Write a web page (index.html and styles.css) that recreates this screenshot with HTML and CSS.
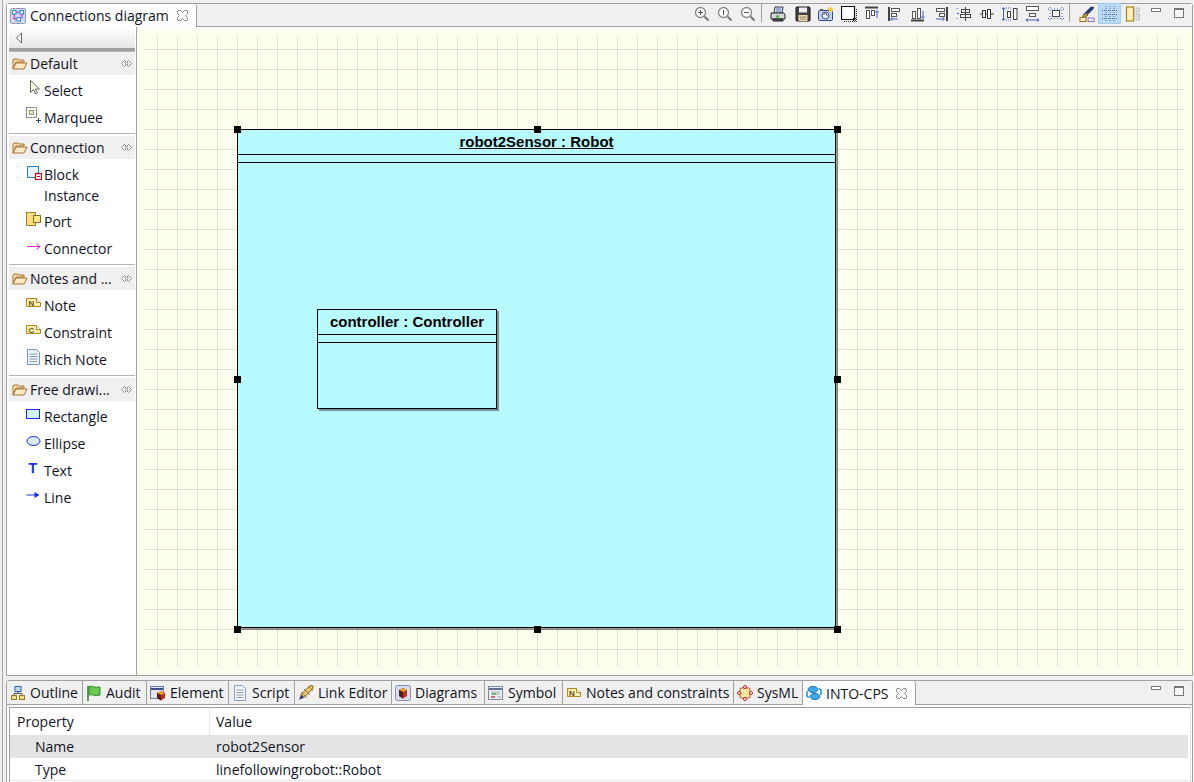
FILE: index.html
```html
<!DOCTYPE html>
<html lang="en">
<head>
    <meta charset="UTF-8">
    <meta name="viewport" content="width=device-width, initial-scale=1.0">
    <title>Connections diagram</title>
    <link rel="stylesheet" href="styles.css">
</head>
<body>
<div class="app">

    <!-- editor pane -->
    <div class="pane editor">
        <div class="tab-strip editor-strip">
            <div class="tab tab-active editor-tab">
                <svg class="icon" viewBox="0 0 16 16"><rect x="0.5" y="0.5" width="15" height="15" rx="2" fill="#d8dcf0" stroke="#8890b0"/><path d="M0 5.5h16M0 10.5h16M5.5 0v16M10.5 0v16" stroke="#b8c0dc"/><path d="M5 4h6M4 6v5h4M12 6v4" stroke="#d010c0" fill="none"/><rect x="2.5" y="2.5" width="3.5" height="3.5" fill="#fff" stroke="#2090e0"/><rect x="10" y="2.5" width="3.5" height="3.5" fill="#fff" stroke="#2090e0"/><rect x="7" y="9.5" width="3.5" height="3.5" fill="#fff" stroke="#2090e0"/></svg>
                <span>Connections diagram</span>
                <svg class="close" viewBox="0 0 11 11"><path d="M1 .5h2.500l2 2 2-2H10l.5.5v2.500l-2 2 2 2V10l-.5.500H7.500l-2-2-2 2H1L.5 10V7.500l2-2-2-2V1z" fill="#fff" stroke="#8a8a8a"/></svg>
            </div>
            <div class="toolbar">
                <span class="tool-btn"><svg class="icon" viewBox="0 0 16 16"><circle cx="6.500" cy="6.500" r="5" fill="#fff" stroke="#8c8c8c" stroke-width="1.400"/><path d="M4 6.500h5M6.500 4v5" stroke="#555"/><path d="M10.500 10.500l4 4" stroke="#777" stroke-width="2"/></svg></span>
                <span class="tool-btn"><svg class="icon" viewBox="0 0 16 16"><circle cx="6.500" cy="6.500" r="5" fill="#fff" stroke="#8c8c8c" stroke-width="1.400"/><path d="M6.500 4v5" stroke="#555"/><path d="M10.500 10.500l4 4" stroke="#777" stroke-width="2"/></svg></span>
                <span class="tool-btn"><svg class="icon" viewBox="0 0 16 16"><circle cx="6.500" cy="6.500" r="5" fill="#fff" stroke="#8c8c8c" stroke-width="1.400"/><path d="M4 6.500h5" stroke="#555"/><path d="M10.500 10.500l4 4" stroke="#777" stroke-width="2"/></svg></span>
                <span class="tool-sep"></span>
                <span class="tool-btn print-btn"><svg class="icon" viewBox="0 0 16 16"><path d="M5 1h8l-1 6H4z" fill="#dfe8f5" stroke="#335"/><path d="M6 3h5M6 5h5" stroke="#57a"/><path d="M1 7h13l1 2v4H1z" fill="#d5d5d5" stroke="#222"/><rect x="6" y="9.500" width="3" height="2" fill="#20c030"/><path d="M3 13h10v2H3z" fill="#555" stroke="#222"/></svg></span>
                <span class="tool-btn"><svg class="icon" viewBox="0 0 16 16"><rect x="1" y="1" width="14" height="14" rx="1" fill="#444" stroke="#111"/><rect x="4" y="1.500" width="8" height="5" fill="#eee"/><rect x="3.500" y="9" width="9" height="6" fill="#e6d9a0"/><path d="M5 11h6M5 13h6" stroke="#987"/></svg></span>
                <span class="tool-btn"><svg class="icon" viewBox="0 0 16 16"><rect x="0.500" y="4.500" width="14" height="10" rx="1" fill="#c6d2ea" stroke="#334a88"/><circle cx="7.500" cy="9.500" r="3.500" fill="#eef" stroke="#334a88"/><path d="M5.500 9l2-2 2 3" stroke="#446" fill="none"/><rect x="2" y="3" width="3" height="2" fill="#556"/><path d="M12.500 0l1 2 2 .5-1.500 1.500.5 2-2-1-2 1 .5-2L9.500 2.500l2-.5z" fill="#f2d020"/></svg></span>
                <span class="tool-btn"><svg class="icon" viewBox="0 0 16 16"><path d="M.5 13.500V.5h13v13z" fill="#fff" stroke="#111" stroke-width="1.200"/><path d="M15.500 3v12.500H3" fill="none" stroke="#222" stroke-dasharray="1 1"/><path d="M12 12l3 3M15 12l-3 3" stroke="#222"/></svg></span>
                <span class="tool-btn"><svg class="icon" viewBox="0 0 16 16"><path d="M1 1.500h13" stroke="#444" stroke-width="2"/><rect x="2.500" y="4.500" width="3" height="8" fill="#fff" stroke="#555"/><rect x="7.500" y="4.500" width="3" height="5" fill="#fff" stroke="#555"/><path d="M13 12V5M11.500 6.500L13 4.500l1.500 2" stroke="#4060c0" fill="none"/></svg></span>
                <span class="tool-btn"><svg class="icon" viewBox="0 0 16 16"><path d="M2 1v14" stroke="#444" stroke-width="2"/><rect x="4.500" y="2.500" width="8" height="3" fill="#fff" stroke="#555"/><rect x="4.500" y="7.500" width="5" height="3" fill="#fff" stroke="#555"/><path d="M4 13h7M5.500 11.500L3.500 13l2 1.500" stroke="#4060c0" fill="none"/></svg></span>
                <span class="tool-btn"><svg class="icon" viewBox="0 0 16 16"><path d="M1 14.500h13" stroke="#444" stroke-width="2"/><rect x="2.500" y="5.500" width="3" height="7" fill="#fff" stroke="#555"/><rect x="7.500" y="2.500" width="3" height="10" fill="#fff" stroke="#555"/><path d="M13 5v7M11.500 10.500L13 12.500l1.500-2" stroke="#4060c0" fill="none"/></svg></span>
                <span class="tool-btn"><svg class="icon" viewBox="0 0 16 16"><path d="M14 1v14" stroke="#444" stroke-width="2"/><rect x="3.500" y="2.500" width="8" height="3" fill="#fff" stroke="#555"/><rect x="6.500" y="7.500" width="5" height="3" fill="#fff" stroke="#555"/><path d="M3 13h8M9.500 11.500l2 1.500-2 1.500" stroke="#4060c0" fill="none"/></svg></span>
                <span class="tool-btn"><svg class="icon" viewBox="0 0 16 16"><path d="M1 2v1M1 7.500h2M1 12v1" stroke="#4060c0"/><rect x="5.500" y="3.500" width="8" height="3" fill="#fff" stroke="#444"/><rect x="4.500" y="8.500" width="10" height="3" fill="#fff" stroke="#444"/><path d="M9.500 1v14" stroke="#444"/></svg></span>
                <span class="tool-btn"><svg class="icon" viewBox="0 0 16 16"><path d="M1 8h14" stroke="#444"/><rect x="3.500" y="4.500" width="3" height="7" fill="#fff" stroke="#333"/><rect x="8.500" y="3.500" width="3" height="9" fill="#fff" stroke="#333"/></svg></span>
                <span class="tool-btn"><svg class="icon" viewBox="0 0 16 16"><path d="M1.500 2v12M0 3.500L1.500 1.500 3 3.500M0 12.500l1.500 2 1.500-2" stroke="#4060c0" fill="none"/><rect x="5.500" y="5.500" width="3" height="6" fill="#fff" stroke="#444"/><rect x="11.500" y="2.500" width="3.500" height="11" fill="#fff" stroke="#444"/><path d="M4 2h6M4 14h6" stroke="#4060c0" stroke-dasharray="1 1"/></svg></span>
                <span class="tool-btn"><svg class="icon" viewBox="0 0 16 16"><rect x="1.500" y="0.500" width="12" height="4" fill="#fff" stroke="#555"/><rect x="4.500" y="7.500" width="6" height="3" fill="#fff" stroke="#555"/><path d="M1 14h13M3 12.500L1 14l2 1.500M12 12.500l2 1.500-2 1.500" stroke="#4060c0" fill="none"/></svg></span>
                <span class="tool-btn"><svg class="icon" viewBox="0 0 16 16"><rect x="4.500" y="4.500" width="7" height="6" fill="#fff" stroke="#444"/><path d="M2 1v14M14 1v14M0 3h16M0 12.500h16" stroke="#4060c0" stroke-dasharray="1 2"/></svg></span>
                <span class="tool-sep tool-sep-wide"></span>
                <span class="tool-btn"><svg class="icon" viewBox="0 0 16 16"><path d="M15 1l-3-0.500-8 8 2.500 2.500 8-8z" fill="#283878"/><path d="M7 7l2 2-3.500 3-2-2z" fill="#c89a30" stroke="#654"/><rect x="1" y="11.500" width="6" height="4" fill="#fff3c8" stroke="#a07010"/><rect x="9" y="12" width="6" height="3.500" fill="#eee" stroke="#9070c0"/></svg></span>
                <span class="tool-btn tool-btn-on"><svg class="icon" viewBox="0 0 16 16"><path d="M0 4.500h16M0 8.500h16M0 12.500h16M4 0v16M8 0v16M12 0v16" stroke="#5070a0" stroke-dasharray="1 1"/></svg></span>
                <span class="tool-btn"><svg class="icon" viewBox="0 0 16 16"><rect x="1.500" y="1" width="7" height="14" fill="#fff0c0" stroke="#b08010" stroke-width="1.200"/><rect x="9" y="2" width="5.500" height="4" fill="#ddd" stroke="#aaa" stroke-dasharray="1 1"/><rect x="9" y="8" width="5.500" height="6" fill="#ddd" stroke="#aaa" stroke-dasharray="1 1"/></svg></span>
                <span class="tool-btn"><span class="min-icon"></span></span>
                <span class="tool-btn"><span class="max-icon"></span></span>
            </div>
        </div>

        <div class="editor-body">
            <div class="palette">
                <div class="palette-head">
                    <svg class="back-arrow" viewBox="0 0 8 12"><path d="M6.500 1L1.500 6l5 5z" fill="#fff" stroke="#666"/></svg>
                </div>

                <div class="group">
                    <div class="group-head">
                        <svg class="icon" viewBox="0 0 16 16"><path d="M1 13V4l1-1h4l1 1h5v2H4z" fill="#f6e0b0" stroke="#a87030"/><path d="M1 13l3-6h11l-3 6z" fill="#fbe9c4" stroke="#a87030"/></svg>
                        <span class="group-name">Default</span>
                        <svg class="pin" viewBox="0 0 11 7"><path d="M.5 3.500l3-3 1.500 1.500-1 1.500 1 1.500-1.500 1.500zM10.500 3.500l-3-3-1.500 1.500 1 1.500-1 1.500 1.500 1.500z" fill="#fff" stroke="#808080" stroke-width=".9"/></svg>
                    </div>
                    <div class="item">
                        <svg class="icon" viewBox="0 0 16 16"><path d="M4.500 0.500v12l3-3 2 4.500 2-1-2-4h4z" fill="#fdfbd8" stroke="#666"/></svg>
                        <span>Select</span>
                    </div>
                    <div class="item">
                        <svg class="icon" viewBox="0 0 16 16"><rect x="0.500" y="0.500" width="10" height="10" fill="none" stroke="#555" stroke-dasharray="2 1"/><rect x="3.500" y="3.500" width="4" height="4" fill="#e6e2b8" stroke="#998"/><path d="M10 13.500h5M12.500 11v5" stroke="#224a78"/></svg>
                        <span>Marquee</span>
                    </div>
                </div>

                <div class="group">
                    <div class="group-head">
                        <svg class="icon" viewBox="0 0 16 16"><path d="M1 13V4l1-1h4l1 1h5v2H4z" fill="#f6e0b0" stroke="#a87030"/><path d="M1 13l3-6h11l-3 6z" fill="#fbe9c4" stroke="#a87030"/></svg>
                        <span class="group-name">Connection</span>
                        <svg class="pin" viewBox="0 0 11 7"><path d="M.5 3.500l3-3 1.500 1.500-1 1.500 1 1.500-1.500 1.500zM10.500 3.500l-3-3-1.500 1.500 1 1.500-1 1.500 1.500 1.500z" fill="#fff" stroke="#808080" stroke-width=".9"/></svg>
                    </div>
                    <div class="item item-tall">
                        <svg class="icon" viewBox="0 0 16 16"><rect x="1.500" y="2.500" width="11" height="11" fill="#e4f2fc" stroke="#2080d0"/><rect x="9.500" y="9.500" width="6" height="6" fill="#fff" stroke="#c01020" stroke-width="1.300"/><path d="M11 12.500h3" stroke="#c01020"/></svg>
                        <span>Block Instance</span>
                    </div>
                    <div class="item">
                        <svg class="icon" viewBox="0 0 16 16"><rect x="0.500" y="1.500" width="9" height="13" fill="#f8dc80" stroke="#a08030"/><rect x="7.500" y="4.500" width="7" height="7" fill="#fbe58f" stroke="#8a7020"/></svg>
                        <span>Port</span>
                    </div>
                    <div class="item">
                        <svg class="icon" viewBox="0 0 16 16"><path d="M1 8.500h13M10.500 5.500l3.500 3-3.500 3" fill="none" stroke="#e020d0"/></svg>
                        <span>Connector</span>
                    </div>
                </div>

                <div class="group">
                    <div class="group-head">
                        <svg class="icon" viewBox="0 0 16 16"><path d="M1 13V4l1-1h4l1 1h5v2H4z" fill="#f6e0b0" stroke="#a87030"/><path d="M1 13l3-6h11l-3 6z" fill="#fbe9c4" stroke="#a87030"/></svg>
                        <span class="group-name">Notes and ...</span>
                        <svg class="pin" viewBox="0 0 11 7"><path d="M.5 3.500l3-3 1.500 1.500-1 1.500 1 1.500-1.500 1.500zM10.500 3.500l-3-3-1.500 1.500 1 1.500-1 1.500 1.500 1.500z" fill="#fff" stroke="#808080" stroke-width=".9"/></svg>
                    </div>
                    <div class="item">
                        <svg class="icon" viewBox="0 0 16 16"><path d="M.5 3.500h10l4 4v4h-14z" fill="#fbeeb0" stroke="#b08820"/><path d="M10.500 3.500v4h4" fill="#fff" stroke="#b08820"/><text x="2.500" y="10.500" class="icon-letter">N</text></svg>
                        <span>Note</span>
                    </div>
                    <div class="item">
                        <svg class="icon" viewBox="0 0 16 16"><path d="M.5 3.500h10l4 4v4h-14z" fill="#fbeeb0" stroke="#b08820"/><path d="M10.500 3.500v4h4" fill="#fff" stroke="#b08820"/><text x="2.500" y="10.500" class="icon-letter">C</text></svg>
                        <span>Constraint</span>
                    </div>
                    <div class="item">
                        <svg class="icon" viewBox="0 0 16 16"><path d="M1.500 .5h9l3 3v12h-12z" fill="#eef3fb" stroke="#7098c8"/><path d="M3.500 5h8M3.500 7.500h8M3.500 10h8M3.500 12.500h8" stroke="#8c9cb4"/></svg>
                        <span>Rich Note</span>
                    </div>
                </div>

                <div class="group">
                    <div class="group-head">
                        <svg class="icon" viewBox="0 0 16 16"><path d="M1 13V4l1-1h4l1 1h5v2H4z" fill="#f6e0b0" stroke="#a87030"/><path d="M1 13l3-6h11l-3 6z" fill="#fbe9c4" stroke="#a87030"/></svg>
                        <span class="group-name">Free drawi...</span>
                        <svg class="pin" viewBox="0 0 11 7"><path d="M.5 3.500l3-3 1.500 1.500-1 1.500 1 1.500-1.500 1.500zM10.500 3.500l-3-3-1.500 1.500 1 1.500-1 1.500 1.500 1.500z" fill="#fff" stroke="#808080" stroke-width=".9"/></svg>
                    </div>
                    <div class="item">
                        <svg class="icon" viewBox="0 0 16 16"><rect x="0.500" y="3.500" width="13" height="9" fill="#d4f4fb" stroke="#1830d8"/></svg>
                        <span>Rectangle</span>
                    </div>
                    <div class="item">
                        <svg class="icon" viewBox="0 0 16 16"><ellipse cx="7.500" cy="8" rx="6.500" ry="4.500" fill="#d4eafb" stroke="#1830d8"/></svg>
                        <span>Ellipse</span>
                    </div>
                    <div class="item">
                        <svg class="icon" viewBox="0 0 16 16"><text x="2.500" y="13" class="icon-t">T</text></svg>
                        <span>Text</span>
                    </div>
                    <div class="item">
                        <svg class="icon" viewBox="0 0 16 16"><path d="M.5 8h9" stroke="#1830d8"/><path d="M8.500 5l5 3-5 3z" fill="#1830d8"/></svg>
                        <span>Line</span>
                    </div>
                </div>
            </div>

            <div class="canvas">
                <div class="grid">
                    <div class="block block-main">
                        <div class="block-title block-title-main">robot2Sensor : Robot</div>
                        <div class="block-gap"></div>
                        <div class="block block-child">
                            <div class="block-title">controller : Controller</div>
                            <div class="block-gap"></div>
                        </div>
                        <span class="handle h-left h-top"></span>
                        <span class="handle h-mid h-top"></span>
                        <span class="handle h-right h-top"></span>
                        <span class="handle h-left h-center"></span>
                        <span class="handle h-right h-center"></span>
                        <span class="handle h-left h-bottom"></span>
                        <span class="handle h-mid h-bottom"></span>
                        <span class="handle h-right h-bottom"></span>
                    </div>
                </div>
            </div>
        </div>
    </div>

    <!-- bottom views -->
    <div class="pane views">
        <div class="tab-strip view-strip">
            <div class="tab view-tab tab-outline">
                <svg class="icon" viewBox="0 0 16 16"><rect x="5" y="1.500" width="6" height="5" fill="#bcd8f4" stroke="#3060b0"/><rect x="1.500" y="10.500" width="5" height="4" fill="#f8dc80" stroke="#a07820"/><rect x="9.500" y="10.500" width="5" height="4" fill="#f8dc80" stroke="#a07820"/><path d="M8 7v2M4 10V8.500h8V10" fill="none" stroke="#555"/></svg>
                <span>Outline</span>
            </div>
            <div class="tab view-tab tab-audit">
                <svg class="icon" viewBox="0 0 16 16"><path d="M2 1v15" stroke="#2a7a2a" stroke-width="1.500"/><path d="M3 1.500c3-1 5 1.500 11 .5v8c-5 1.500-8-1-11 0z" fill="#6cc84c" stroke="#2f8a2f"/></svg>
                <span>Audit</span>
            </div>
            <div class="tab view-tab tab-element">
                <svg class="icon" viewBox="0 0 16 16"><rect x="0.500" y="1.500" width="13" height="12" fill="#dfe4f2" stroke="#6a7aa0"/><path d="M1 4h12" stroke="#405080" stroke-width="2"/><path d="M7 8l4-2 4 2v5l-4 2.500L7 13z" fill="#c03020"/><path d="M7 8l4 2 4-2-4-2z" fill="#e8a020"/><path d="M11 10v5.500L7 13V8z" fill="#502018"/></svg>
                <span>Element</span>
            </div>
            <div class="tab view-tab tab-script">
                <svg class="icon" viewBox="0 0 16 16"><path d="M2.500 .5h8l3 3v12h-11z" fill="#f4f6fb" stroke="#8aa0c0"/><path d="M4.500 5h7M4.500 7.500h7M4.500 10h7M4.500 12.500h7" stroke="#909cb0"/></svg>
                <span>Script</span>
            </div>
            <div class="tab view-tab tab-link">
                <svg class="icon" viewBox="0 0 16 16"><path d="M15 1l-3-.5-9 9 3 3 9-9z" fill="#e8c868" stroke="#806020"/><path d="M6 4l6 6M3 7l6 6M10 1l5 5" stroke="#806020" stroke-width=".7"/><path d="M3 9.500l-2 5.500 5-2.500z" fill="#283878"/></svg>
                <span>Link Editor</span>
            </div>
            <div class="tab view-tab tab-diagrams">
                <svg class="icon" viewBox="0 0 16 16"><rect x="0.500" y="0.500" width="15" height="15" rx="2" fill="#d8dcf0" stroke="#8890b0"/><path d="M4 5l4-2 4 2v6l-4 2.500L4 11z" fill="#c03020"/><path d="M4 5l4 2 4-2-4-2z" fill="#e8a020"/><path d="M8 7v6.500L4 11V5z" fill="#502018"/></svg>
                <span>Diagrams</span>
            </div>
            <div class="tab view-tab tab-symbol">
                <svg class="icon" viewBox="0 0 16 16"><rect x="0.500" y="1.500" width="14" height="13" fill="#eef0f6" stroke="#7a8aa8"/><path d="M1 4h13" stroke="#607090" stroke-width="2"/><path d="M3 7h9M3 9h9" stroke="#9aa8bc"/><rect x="4" y="8" width="4" height="2" fill="#60c070"/><rect x="3" y="11" width="4" height="2" fill="#e07070"/><rect x="9" y="11" width="4" height="2" fill="#c0c8d8"/></svg>
                <span>Symbol</span>
            </div>
            <div class="tab view-tab tab-notes">
                <svg class="icon" viewBox="0 0 16 16"><path d="M1.500 3.500h9l4 4v4h-13z" fill="#fbeeb0" stroke="#b08820"/><path d="M10.500 3.500v4h4" fill="#fff" stroke="#b08820"/><text x="3" y="10.500" class="icon-letter">N</text></svg>
                <span>Notes and constraints</span>
            </div>
            <div class="tab view-tab tab-sysml">
                <svg class="icon" viewBox="0 0 16 16"><rect x="3" y="3" width="10" height="10" rx="1" fill="#fbe7a0" stroke="#c05040"/><circle cx="8" cy="2" r="1.500" fill="#fff" stroke="#c02020"/><circle cx="2" cy="8" r="1.500" fill="#fff" stroke="#c02020"/><circle cx="14" cy="8" r="1.500" fill="#fff" stroke="#c02020"/><circle cx="8" cy="14" r="1.500" fill="#fff" stroke="#c02020"/></svg>
                <span>SysML</span>
            </div>
            <div class="tab tab-active view-tab tab-into">
                <svg class="icon" viewBox="0 0 16 16"><ellipse cx="7" cy="4.500" rx="5" ry="3" fill="#40a8e8" stroke="#1070c0"/><ellipse cx="9" cy="11.500" rx="5" ry="3" fill="#40a8e8" stroke="#1070c0"/><path d="M1 6v5l2 1.500M15 10V5l-2-1.500" fill="none" stroke="#1890d8" stroke-width="1.500"/></svg>
                <span>INTO-CPS</span>
                <svg class="close" viewBox="0 0 11 11"><path d="M1 .5h2.500l2 2 2-2H10l.5.5v2.500l-2 2 2 2V10l-.5.500H7.500l-2-2-2 2H1L.5 10V7.500l2-2-2-2V1z" fill="#fff" stroke="#8a8a8a"/></svg>
            </div>
            <div class="view-controls">
                <span class="tool-btn"><span class="min-icon"></span></span>
                <span class="tool-btn"><span class="max-icon"></span></span>
            </div>
        </div>

        <div class="props">
            <div class="prop-row prop-head">
                <div class="prop-key">Property</div>
                <div class="prop-value">Value</div>
            </div>
            <div class="prop-row prop-selected">
                <div class="prop-key prop-indent">Name</div>
                <div class="prop-value">robot2Sensor</div>
            </div>
            <div class="prop-row prop-last">
                <div class="prop-key prop-indent">Type</div>
                <div class="prop-value">linefollowingrobot::Robot</div>
            </div>
        </div>
    </div>
</div>
</body>
</html>
```

FILE: styles.css
```css
html, body {
    margin: 0;
    height: 100%;
    overflow: hidden;
}
body {
    font-family: "Open Sans", "Noto Sans", sans-serif;
    font-size: 14px;
    color: #10131f;
    background-color: #f0f0f0;
}
.app {
    margin-left: 2px;
    border-left: 1px solid #a8a8a8;
    padding: 3px 1px 0 3px;
    height: 779px;
    display: flex;
    flex-direction: column;
    gap: 4px;
}
.icon {
    width: 16px;
    height: 16px;
    flex: none;
}
.close {
    width: 11px;
    height: 11px;
    flex: none;
}
.icon-letter {
    font-family: "Liberation Sans", sans-serif;
    font-size: 8px;
    font-weight: bold;
    fill: #6a5010;
}
.icon-t {
    font-family: "Liberation Sans", sans-serif;
    font-size: 14px;
    font-weight: bold;
    fill: #1830e8;
}

/* panes and tabs */
.pane {
    border: 1px solid #a0a0a0;
    border-radius: 3px 3px 0 0;
    background-color: #fff;
    display: flex;
    flex-direction: column;
}
.editor {
    height: 673px;
    box-sizing: border-box;
}
.views {
    flex: 1;
    border-bottom: none;
    min-height: 0;
}
.tab-strip {
    display: flex;
    height: 23px;
    background-color: #f0f0f0;
    border-bottom: 1px solid #a0a0a0;
    flex: none;
}
.editor-strip {
    height: 22px;
}
.tab {
    display: flex;
    align-items: center;
    gap: 4px;
    height: 23px;
    box-sizing: border-box;
    white-space: nowrap;
}
.tab-active {
    background-color: #fff;
    height: 24px;
    border-right: 1px solid #a0a0a0;
    border-radius: 0 3px 0 0;
}
.editor-tab {
    width: 190px;
    height: 23px;
    padding-left: 3px;
}
.editor-tab .close {
    margin-left: 4px;
}

/* toolbar */
.toolbar {
    margin-left: auto;
    display: flex;
    align-items: flex-start;
    padding-right: 2px;
}
.tool-btn {
    width: 23px;
    height: 19px;
    box-sizing: border-box;
    display: flex;
    align-items: center;
    justify-content: center;
}
.print-btn {
    margin-right: 2px;
}
.tool-btn-on {
    height: 21px;
    margin-top: -1px;
    background-color: #bbdaf5;
    border: 1px solid #9fcdf3;
}
.tool-sep {
    width: 5px;
    height: 18px;
    box-sizing: border-box;
    border-left: 1px solid #a0a0a0;
    margin-left: 2px;
}
.tool-sep-wide {
    width: 6px;
}
.min-icon {
    width: 10px;
    height: 4px;
    box-sizing: border-box;
    border: 1px solid #777;
    background-color: #fff;
    margin-bottom: 7px;
}
.max-icon {
    width: 10px;
    height: 10px;
    box-sizing: border-box;
    border: 1px solid #777;
    border-top-width: 2px;
    background-color: #f8f8f8;
    margin-bottom: 1px;
}

/* palette */
.editor-body {
    flex: 1;
    display: flex;
    min-height: 0;
}
.palette {
    width: 130px;
    box-sizing: border-box;
    border-right: 1px solid #a0a0a0;
    padding: 0 1px 0 2px;
    flex: none;
}
.palette-head {
    height: 21px;
    border-bottom: 3px solid #a0a0a0;
    background: linear-gradient(#fff, #e6e6e6);
    display: flex;
    align-items: center;
    padding-left: 6px;
}
.back-arrow {
    width: 8px;
    height: 12px;
}
.group {
    border-top: 1px solid #b4b4b4;
    margin-top: 2px;
    padding-top: 2px;
}
.palette-head + .group {
    margin-top: 0;
    padding-top: 0;
}
.group-head {
    height: 23px;
    background-color: #f0f0f0;
    display: flex;
    align-items: center;
    gap: 2px;
    padding-left: 3px;
    white-space: nowrap;
    margin-bottom: 2px;
}
.group-name {
    flex: 1;
}
.pin {
    width: 11px;
    height: 7px;
    margin-right: 3px;
}
.item {
    display: flex;
    align-items: flex-start;
    gap: 2px;
    height: 27px;
    box-sizing: border-box;
    padding: 3px 0 0 17px;
    line-height: 21px;
}
.item-tall {
    height: 47px;
}
.item-tall span {
    width: 70px;
}

/* diagram */
.canvas {
    flex: 1;
    padding-top: 2px;
    min-width: 0;
    display: flex;
}
.grid {
    flex: 1;
    background-color: #ffffef;
    position: relative;
}
.grid::before {
    content: "";
    position: absolute;
    left: 8px;
    top: 8px;
    right: 8px;
    bottom: 9px;
    background-image:
        linear-gradient(to right, #e2e2d2 1px, transparent 1px),
        linear-gradient(to bottom, #e2e2d2 1px, transparent 1px);
    background-size: 20px 20px;
    background-position: 12px 12px;
}
.block {
    position: absolute;
    box-sizing: border-box;
    background-color: #b8fbff;
    border: 1px solid #000;
    font-family: "Liberation Sans", Arial, sans-serif;
    font-size: 15px;
    font-weight: bold;
    color: #000;
}
.block-main {
    left: 100px;
    top: 100px;
    width: 599px;
    height: 499px;
    box-shadow: 2px 2px 0 rgba(0, 0, 0, 0.4);
}
.block-child {
    left: 79px;
    top: 179px;
    width: 180px;
    height: 100px;
    box-shadow: 2px 2px 0 rgba(0, 0, 0, 0.4);
}
.block-title {
    height: 25px;
    box-sizing: border-box;
    border-bottom: 1px solid #000;
    line-height: 24px;
    text-align: center;
}
.block-title-main {
    text-decoration: underline;
}
.block-gap {
    height: 8px;
    box-sizing: border-box;
    border-bottom: 1px solid #000;
}
.handle {
    position: absolute;
    width: 7px;
    height: 7px;
    background-color: #000;
}
.h-left { left: -4px; }
.h-mid { left: 296px; }
.h-right { left: 596px; }
.h-top { top: -4px; }
.h-center { top: 246px; }
.h-bottom { top: 496px; }

/* bottom tabs */
.view-strip {
    position: relative;
}
.view-tab {
    border-right: 1px solid #a0a0a0;
    gap: 4px;
    padding-left: 3px;
    flex: none;
}
.tab-outline { width: 76px; }
.tab-audit { width: 64px; }
.tab-element { width: 82px; }
.tab-script { width: 66px; }
.tab-link { width: 97px; }
.tab-diagrams { width: 93px; }
.tab-symbol { width: 78px; }
.tab-notes { width: 171px; }
.tab-sysml { width: 69px; }
.tab-into { width: 113px; }
.tab-into .close {
    margin-left: 4px;
}
.view-controls {
    margin-left: auto;
    display: flex;
    padding: 1px 2px 0 0;
}

/* property table */
.props {
    flex: 1;
    margin: 2px 1px 0 2px;
    border-top: 1px solid #a0a0a0;
    border-left: 1px solid #a0a0a0;
    border-right: 1px solid #e0e0e0;
    padding-right: 2px;
}
.prop-row {
    display: grid;
    grid-template-columns: 200px 1fr;
    height: 23px;
    line-height: 23px;
}
.prop-head {
    height: 27px;
    line-height: 28px;
}
.prop-head .prop-key {
    border-right: 1px solid #e8e8e8;
}
.prop-selected {
    background-color: #e4e4e4;
}
.prop-last {
    height: 22px;
    border-bottom: 1px solid #e4e4e4;
}
.prop-key {
    padding-left: 7px;
}
.prop-indent {
    padding-left: 25px;
}
.prop-value {
    padding-left: 6px;
}
```
